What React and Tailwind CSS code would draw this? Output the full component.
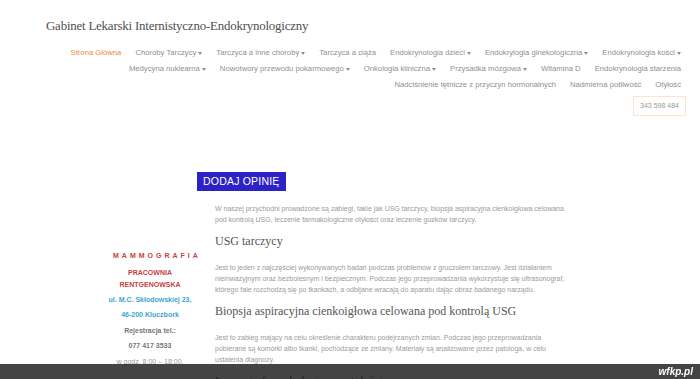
import React from 'react';

const sans = { fontFamily: '"Liberation Sans", Arial, sans-serif' };
const serif = { fontFamily: '"Liberation Serif", "Times New Roman", serif' };

const navRows = [
  [
    { label: 'Strona Główna', active: true },
    { label: 'Choroby Tarczycy', drop: true },
    { label: 'Tarczyca a inne choroby', drop: true },
    { label: 'Tarczyca a ciąża' },
    { label: 'Endokrynologia dzieci', drop: true },
    { label: 'Endokrylogia ginekologiczna', drop: true },
    { label: 'Endokrynologia kości', drop: true },
  ],
  [
    { label: 'Medycyna nuklearna', drop: true },
    { label: 'Nowotwory przewodu pokarmowego', drop: true },
    { label: 'Onkologia kliniczna', drop: true },
    { label: 'Przysadka mózgowa', drop: true },
    { label: 'Witamina D' },
    { label: 'Endokrynologia starzenia' },
  ],
  [
    { label: 'Nadciśnienie tętnicze z przyczyn hormonalnych' },
    { label: 'Nadmierna potliwość' },
    { label: 'Otyłość' },
  ],
];

function NavItem({ item }) {
  return (
    <a
      href="#"
      className={`flex items-center px-[7px] leading-[16px] whitespace-nowrap ${
        item.active ? 'text-[#f0883e]' : 'text-[#8f8f8f]'
      }`}
    >
      {item.label}
      {item.drop && (
        <span className="ml-[2px] inline-block w-0 h-0 border-l-[2.5px] border-r-[2.5px] border-t-[3px] border-l-transparent border-r-transparent border-t-[#8f8f8f]" />
      )}
    </a>
  );
}

function Section({ title, children }) {
  return (
    <div>
      <h2 className="text-[12px] text-[#555] leading-[16px] mt-[8px]" style={serif}>
        {title}
      </h2>
      <p className="mt-[13px] text-[7px] leading-[11px] text-[#9a9a9a] pr-[6px]">{children}</p>
    </div>
  );
}

export default function App() {
  return (
    <div className="min-h-screen bg-white relative" style={sans}>
      {/* Header */}
      <header className="pt-[16px] pl-[46px] pr-[12px]">
        <h1 className="text-[12.9px] text-[#4f4f4f] leading-[20px] tracking-[-0.2px]" style={serif}>
          Gabinet Lekarski Internistyczno-Endokrynologiczny
        </h1>
        <nav className="mt-[9px] text-[7.7px] flex flex-col items-end">
          {navRows.map((row, i) => (
            <div key={i} className="flex justify-end">
              {row.map((item) => (
                <NavItem key={item.label} item={item} />
              ))}
            </div>
          ))}
          <div className="mt-[3px] mr-[2px] border border-[#fde3d2] px-[6px] py-[4px] text-[7px] text-[#999] leading-[10px]">
            343 598 484
          </div>
        </nav>
      </header>

      {/* Body */}
      <div className="flex mt-[52px]">
        <aside className="ml-[105px] w-[90px] pt-[80px] text-center text-[7px] font-bold leading-[15.5px]">
          <div className="text-[#c8413f] tracking-[3px] pl-[8px]">MAMMOGRAFIA</div>
          <div className="text-[#c8413f] leading-[12px] mt-[3px]">
            PRACOWNIA
            <br />
            RENTGENOWSKA
          </div>
          <div className="text-[#3ba7d0] mt-[1px]">ul. M.C. Skłodowskiej 23,</div>
          <div className="text-[#3ba7d0]">46-200 Kluczbork</div>
          <div className="text-[#777]">Rejestracja tel.:</div>
          <div className="text-[#777]">077 417 3533</div>
          <div className="text-[#999] font-normal">w godz. 8:00 – 18:00.</div>
        </aside>

        <main className="ml-[2px] w-[375px]">
          <button className="bg-[#2d22c6] text-white text-[10.5px] px-[6px] h-[19px] leading-[19px] tracking-[0.2px]">
            DODAJ OPINIĘ
          </button>
          <div className="pl-[18px] pt-[11px]">
            <p className="text-[7px] leading-[11px] text-[#9a9a9a] pr-[6px]">
              W naszej przychodni prowadzone są zabiegi, takie jak USG tarczycy, biopsja aspiracyjna cienkoigłowa celowana
              pod kontrolą USG, leczenie farmakologiczne otyłości oraz leczenie guzków tarczycy.
            </p>
            <Section title="USG tarczycy">
              Jest to jeden z najczęściej wykonywanych badań podczas problemów z gruczołem tarczowy. Jest działaniem
              nieinwazyjnym oraz bezbolesnym i bezpiecznym. Podczas jego przeprowadzania wykorzystuje się ultrasonograf,
              którego fale rozchodzą się po tkankach, a odbijane wracają do aparatu dając obraz badanego narządu.
            </Section>
            <Section title="Biopsja aspiracyjna cienkoigłowa celowana pod kontrolą USG">
              Jest to zabieg mający na celu określenie charakteru podejrzanych zmian. Podczas jego przeprowadzania
              pobierane są komórki albo tkanki, pochodzące ze zmiany. Materiały są analizowane przez patologa, w celu
              ustalenia diagnozy.
            </Section>
            <Section title="Leczenie farmakologiczne otyłości">
              Leczenie farmakologiczne otyłości polega na stosowaniu leków wspomagających redukcję masy ciała.
            </Section>
          </div>
        </main>
      </div>

      {/* Bottom bar */}
      <div className="fixed bottom-0 left-0 right-0 h-[15px] bg-[#151515]/80 flex items-center justify-end pr-[7px]">
        <span className="text-white text-[10px] font-bold italic leading-none">wfkp.pl</span>
      </div>
    </div>
  );
}
